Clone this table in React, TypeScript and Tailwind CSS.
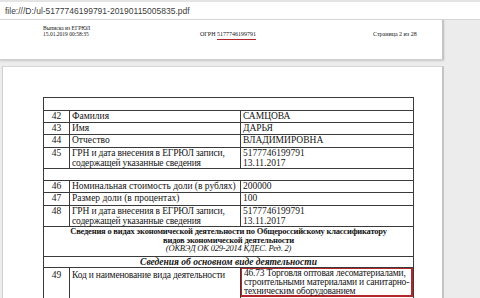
const rows1 = [
    { n: '42', name: 'Фамилия', value: ['САМЦОВА'], h: 'h-[12px]' },
    { n: '43', name: 'Имя', value: ['ДАРЬЯ'], h: 'h-[12px]' },
    { n: '44', name: 'Отчество', value: ['ВЛАДИМИРОВНА'], h: 'h-[13px]' },
];

const grn = 'ГРН и дата внесения в ЕГРЮЛ записи, содержащей указанные сведения';

const App = () => {
    const cell = 'border border-[#3a3a3a] px-[2px] py-0 align-top';
    const num = 'border border-[#3a3a3a] px-0 py-0 text-center align-top';

    return (
        <div className="w-[480px] h-[298px] overflow-hidden bg-[#ececec] flex flex-col font-['Liberation_Serif',serif] text-[#151515]">
            <div className="h-[20px] shrink-0 bg-white border-t-2 border-t-[#e4e4e4] border-b border-b-[#d6d6d6] flex items-center pl-[5px] pt-[1px]">
                <span className="font-['Liberation_Sans',sans-serif] text-[8.5px] text-[#3c3c3c]">
                    file:///D:/ul-5177746199791-20190115005835.pdf
                </span>
            </div>

            <div className="w-[444px] h-[40px] shrink-0 bg-white border-r-2 border-r-[#c4c4c4] border-b border-b-[#cfcfcf] shadow-[0_1px_2px_rgba(0,0,0,0.15)] pl-[43px] pt-[5px]">
                <div className="flex items-end text-[5.5px] leading-[6px]">
                    <div className="w-[157px]">
                        <div>Выписка из ЕГРЮЛ</div>
                        <div>15.01.2019 00:58:35</div>
                    </div>
                    <div className="w-[173px] text-[6px]">
                        ОГРН{' '}
                        <span className="border-b border-b-[#b0282d] pb-[2px]">5177746199791</span>
                    </div>
                    <div className="text-[6px]">Страница 2 из 28</div>
                </div>
            </div>

            <div className="mt-[6px] ml-[2px] w-[442px] flex-1 bg-white border-l border-l-[#d0d0d0] border-t border-t-[#d6d6d6] border-r-2 border-r-[#c4c4c4] pt-[30px] pl-[40px]">
                <table className="table-fixed border-collapse w-[370px] text-[9.5px] leading-[10px]">
                    <colgroup>
                        <col className="w-[26px]" />
                        <col className="w-[171px]" />
                        <col className="w-[173px]" />
                    </colgroup>
                    <tbody>
                        <tr className="h-[13px]">
                            <td colSpan={3} className={cell}></td>
                        </tr>
                        {rows1.map((r) => (
                            <tr key={r.n} className={r.h}>
                                <td className={num}>{r.n}</td>
                                <td className={cell}>{r.name}</td>
                                <td className={cell}>{r.value.join(' ')}</td>
                            </tr>
                        ))}
                        <tr className="h-[21px]">
                            <td className={num}>45</td>
                            <td className={`${cell} tracking-[-0.15px]`}>{grn}</td>
                            <td className={cell}>
                                5177746199791
                                <br />
                                13.11.2017
                            </td>
                        </tr>
                        <tr className="h-[12px]">
                            <td colSpan={3} className={cell}></td>
                        </tr>
                        <tr className="h-[12px]">
                            <td className={num}>46</td>
                            <td className={cell}>Номинальная стоимость доли (в рублях)</td>
                            <td className={cell}>200000</td>
                        </tr>
                        <tr className="h-[13px]">
                            <td className={num}>47</td>
                            <td className={cell}>Размер доли (в процентах)</td>
                            <td className={cell}>100</td>
                        </tr>
                        <tr className="h-[20px]">
                            <td className={num}>48</td>
                            <td className={`${cell} tracking-[-0.15px]`}>{grn}</td>
                            <td className={cell}>
                                5177746199791
                                <br />
                                13.11.2017
                            </td>
                        </tr>
                        <tr className="h-[30px]">
                            <td colSpan={3} className={`${cell} text-center text-[8.5px] leading-[8.5px] tracking-[-0.2px] align-middle`}>
                                <div className="font-bold">
                                    Сведения о видах экономической деятельности по Общероссийскому классификатору
                                    <br />
                                    видов экономической деятельности
                                </div>
                                <div className="italic">(ОКВЭД ОК 029-2014 КДЕС. Ред. 2)</div>
                            </td>
                        </tr>
                        <tr className="h-[11px]">
                            <td colSpan={3} className={`${cell} text-center font-bold italic leading-[10px]`}>
                                Сведения об основном виде деятельности
                            </td>
                        </tr>
                        <tr className="h-[40px]">
                            <td className={`${num} pt-[2px]`}>49</td>
                            <td className={`${cell} pt-[2px] tracking-[-0.2px]`}>Код и наименование вида деятельности</td>
                            <td className="border border-[#3a3a3a] p-0 align-top">
                                <div className="-ml-[1px] -mt-[1px] h-[30px] border-2 border-[#b3262c] pl-[2px] pr-0 pt-0 text-[9.5px] leading-[9px] tracking-[-0.2px]">
                                    46.73 Торговля оптовая лесоматериалами, строительными материалами и санитарно-техническим оборудованием
                                </div>
                            </td>
                        </tr>
                    </tbody>
                </table>
            </div>
        </div>
    );
};

export default App;
